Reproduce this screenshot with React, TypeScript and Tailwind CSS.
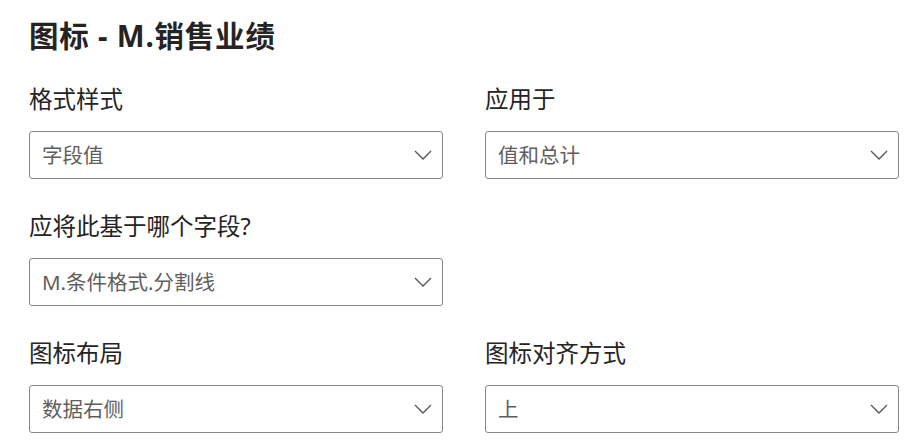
import React from "react";

const font = { fontFamily: '"Noto Sans", "Noto Sans CJK SC", sans-serif' };

function Chevron() {
  return (
    <svg width="18" height="10" viewBox="0 0 18 10" fill="none" className="shrink-0">
      <path d="M1 1 L9 9 L17 1" stroke="#555" strokeWidth="1.3" fill="none" />
    </svg>
  );
}

function Field({ label, value }: { label: string; value: string }) {
  return (
    <div className="flex flex-col">
      <div className="h-[28px] leading-[28px] text-[23.5px] text-[#252423]">{label}</div>
      <div className="mt-[18px] h-[48px] border border-[#8a8886] rounded-[3px] flex items-center justify-between pl-[12px] pr-[10px]">
        <span className="text-[20.5px] text-[#605e5c]">{value}</span>
        <Chevron />
      </div>
    </div>
  );
}

export default function App() {
  return (
    <div className="w-[917px] h-[447px] bg-white overflow-hidden pl-[29px] pt-[18px]" style={font}>
      <div className="h-[36px] leading-[36px] text-[29.5px] tracking-[0.8px] font-bold text-[#252423]">图标 - M.销售业绩</div>
      <div className="mt-[31px] grid grid-cols-[414px_414px] gap-x-[42px] gap-y-[33px]">
        <Field label="格式样式" value="字段值" />
        <Field label="应用于" value="值和总计" />
        <Field label="应将此基于哪个字段?" value="M.条件格式.分割线" />
        <div />
        <Field label="图标布局" value="数据右侧" />
        <Field label="图标对齐方式" value="上" />
      </div>
    </div>
  );
}
